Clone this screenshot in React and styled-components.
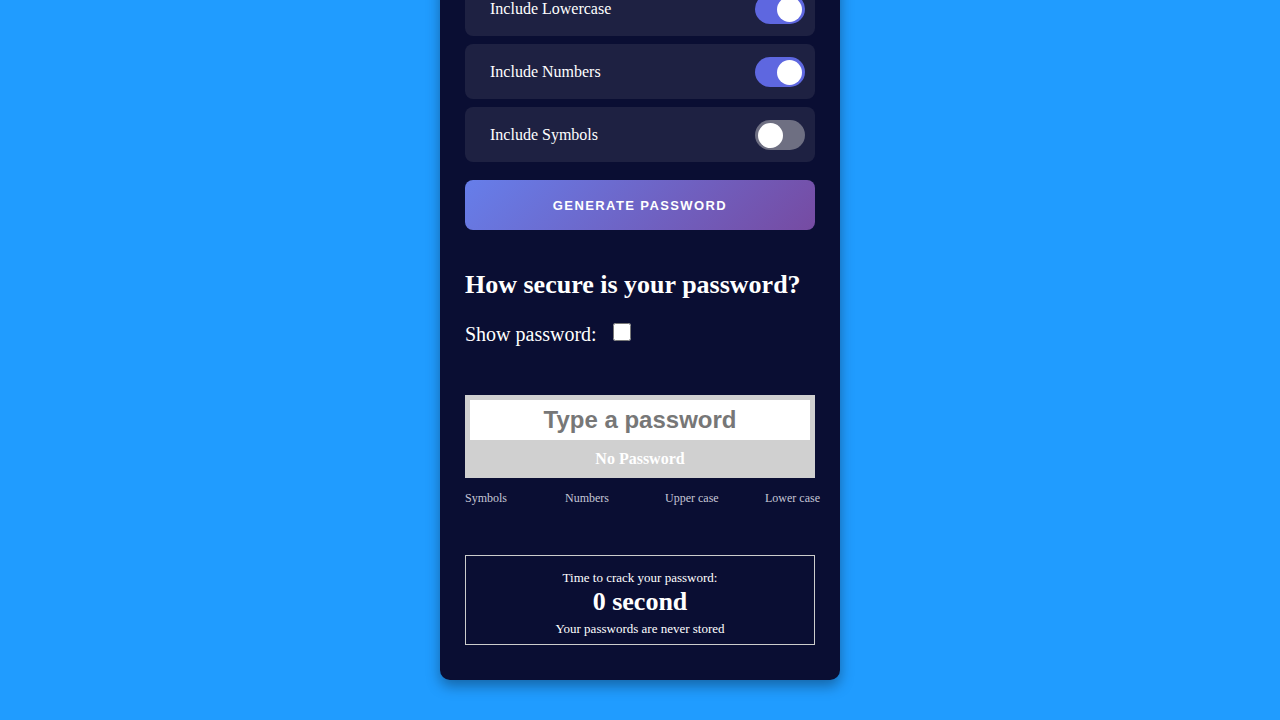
import React, { useState } from "react";
import styled, { createGlobalStyle } from "styled-components";

const GlobalStyle = createGlobalStyle`
  html, body {
    margin: 0;
    padding: 0;
  }
  body {
    background: #209cff;
    font-family: "Liberation Serif", "Times New Roman", serif;
  }
`;

// the card is taller than the window, so it sits on the bottom edge and overflows upward
const Page = styled.div`
  height: 100vh;
  box-sizing: border-box;
  padding-bottom: 40px;
  display: flex;
  flex-direction: column;
  align-items: center;
  justify-content: flex-end;
  overflow: hidden;
`;

const Card = styled.div`
  flex-shrink: 0;
  width: 400px;
  box-sizing: border-box;
  padding: 25px 25px 35px;
  background: #0a0e33;
  border-radius: 10px;
  box-shadow: 0 6px 14px rgba(0, 0, 0, 0.35);
  color: #fff;
`;

const Title = styled.h1`
  margin: 0 0 20px;
  font-size: 26px;
  text-align: center;
`;

const Result = styled.div`
  height: 50px;
  border-radius: 8px;
  background: #1e2142;
  display: flex;
  align-items: center;
  padding: 0 15px;
  font-size: 18px;
  color: #9a9cc0;
`;

const Settings = styled.div`
  margin-top: 20px;
  display: flex;
  flex-direction: column;
  gap: 8px;
`;

const OptionRow = styled.div`
  height: 55px;
  box-sizing: border-box;
  padding: 0 10px 0 25px;
  display: flex;
  align-items: center;
  justify-content: space-between;
  background: #1e2142;
  border-radius: 8px;
  font-size: 16px;
`;

const SwitchLabel = styled.label`
  position: relative;
  display: block;
  width: 50px;
  height: 30px;
  cursor: pointer;

  input {
    display: none;
  }
`;

const Track = styled.span`
  display: block;
  width: 100%;
  height: 100%;
  border-radius: 15px;
  background: ${(p) => (p.$on ? "#5e67e0" : "#6e6f82")};
  transition: background 0.2s;

  &::before {
    content: "";
    position: absolute;
    top: 3px;
    left: ${(p) => (p.$on ? "22px" : "3px")};
    width: 25px;
    height: 25px;
    border-radius: 50%;
    background: #fff;
    transition: left 0.2s;
  }
`;

const GenerateButton = styled.button`
  margin-top: 18px;
  width: 100%;
  height: 50px;
  border: none;
  border-radius: 8px;
  background: linear-gradient(135deg, #667eea 0%, #764ba2 100%);
  color: #fff;
  font-family: "Liberation Sans", Arial, sans-serif;
  font-weight: 700;
  font-size: 13px;
  letter-spacing: 1.4px;
  cursor: pointer;
`;

const Heading = styled.h2`
  margin: 40px 0 0;
  font-size: 26px;
`;

const ShowRow = styled.label`
  display: block;
  margin-top: 23px;
  font-size: 20px;

  input {
    width: 18px;
    height: 18px;
    margin: 0 0 0 16px;
  }
`;

const MeterBox = styled.div`
  margin-top: 49px;
  background: #d0d0d0;
  padding: 5px 5px 0;
`;

const PasswordInput = styled.input`
  display: block;
  width: 100%;
  height: 40px;
  box-sizing: border-box;
  border: none;
  outline: none;
  text-align: center;
  font-family: "Liberation Sans", Arial, sans-serif;
  font-weight: 700;
  font-size: 24px;
  color: #333;

  &::placeholder {
    color: #777;
  }
`;

const Strength = styled.div`
  height: 38px;
  display: flex;
  align-items: center;
  justify-content: center;
  font-weight: 700;
  font-size: 16px;
  color: #fff;
`;

const Criteria = styled.div`
  margin-top: 13px;
  display: flex;
`;

const Criterion = styled.span`
  flex: 0 0 100px;
  font-size: 12px;
  white-space: nowrap;
  color: ${(p) => (p.$met ? "#7cf29a" : "#c5c6d6")};
`;

const CrackBox = styled.div`
  margin-top: 49px;
  border: 1px solid #ccc;
  padding: 14px 10px 7px;
  text-align: center;
`;

const Small = styled.div`
  font-size: 13px;
`;

const CrackTime = styled.div`
  margin: 1px 0 4px;
  font-size: 26px;
  font-weight: 700;
`;

function Switch({ on, onChange }) {
  return (
    <SwitchLabel>
      <input type="checkbox" checked={on} onChange={onChange} />
      <Track $on={on} />
    </SwitchLabel>
  );
}

const optionList = [
  { key: "upper", label: "Include Uppercase" },
  { key: "lower", label: "Include Lowercase" },
  { key: "numbers", label: "Include Numbers" },
  { key: "symbols", label: "Include Symbols" },
];

export default function App() {
  const [options, setOptions] = useState({
    upper: true,
    lower: true,
    numbers: true,
    symbols: false,
  });
  const [password, setPassword] = useState("");
  const [show, setShow] = useState(false);

  const toggle = (key) => setOptions({ ...options, [key]: !options[key] });

  return (
    <Page>
      <GlobalStyle />
      <Card>
        <Title>Password Generator</Title>
        <Result>Click Generate</Result>
        <Settings>
          {optionList.map((opt) => (
            <OptionRow key={opt.key}>
              {opt.label}
              <Switch on={options[opt.key]} onChange={() => toggle(opt.key)} />
            </OptionRow>
          ))}
        </Settings>
        <GenerateButton>GENERATE PASSWORD</GenerateButton>

        <Heading>How secure is your password?</Heading>
        <ShowRow>
          Show password:
          <input type="checkbox" checked={show} onChange={() => setShow(!show)} />
        </ShowRow>

        <MeterBox>
          <PasswordInput
            type={show ? "text" : "password"}
            placeholder="Type a password"
            value={password}
            onChange={(e) => setPassword(e.target.value)}
          />
          <Strength>No Password</Strength>
        </MeterBox>
        <Criteria>
          <Criterion $met={/[^a-zA-Z0-9]/.test(password)}>Symbols</Criterion>
          <Criterion $met={/[0-9]/.test(password)}>Numbers</Criterion>
          <Criterion $met={/[A-Z]/.test(password)}>Upper case</Criterion>
          <Criterion $met={/[a-z]/.test(password)}>Lower case</Criterion>
        </Criteria>

        <CrackBox>
          <Small>Time to crack your password:</Small>
          <CrackTime>0 second</CrackTime>
          <Small>Your passwords are never stored</Small>
        </CrackBox>
      </Card>
    </Page>
  );
}
